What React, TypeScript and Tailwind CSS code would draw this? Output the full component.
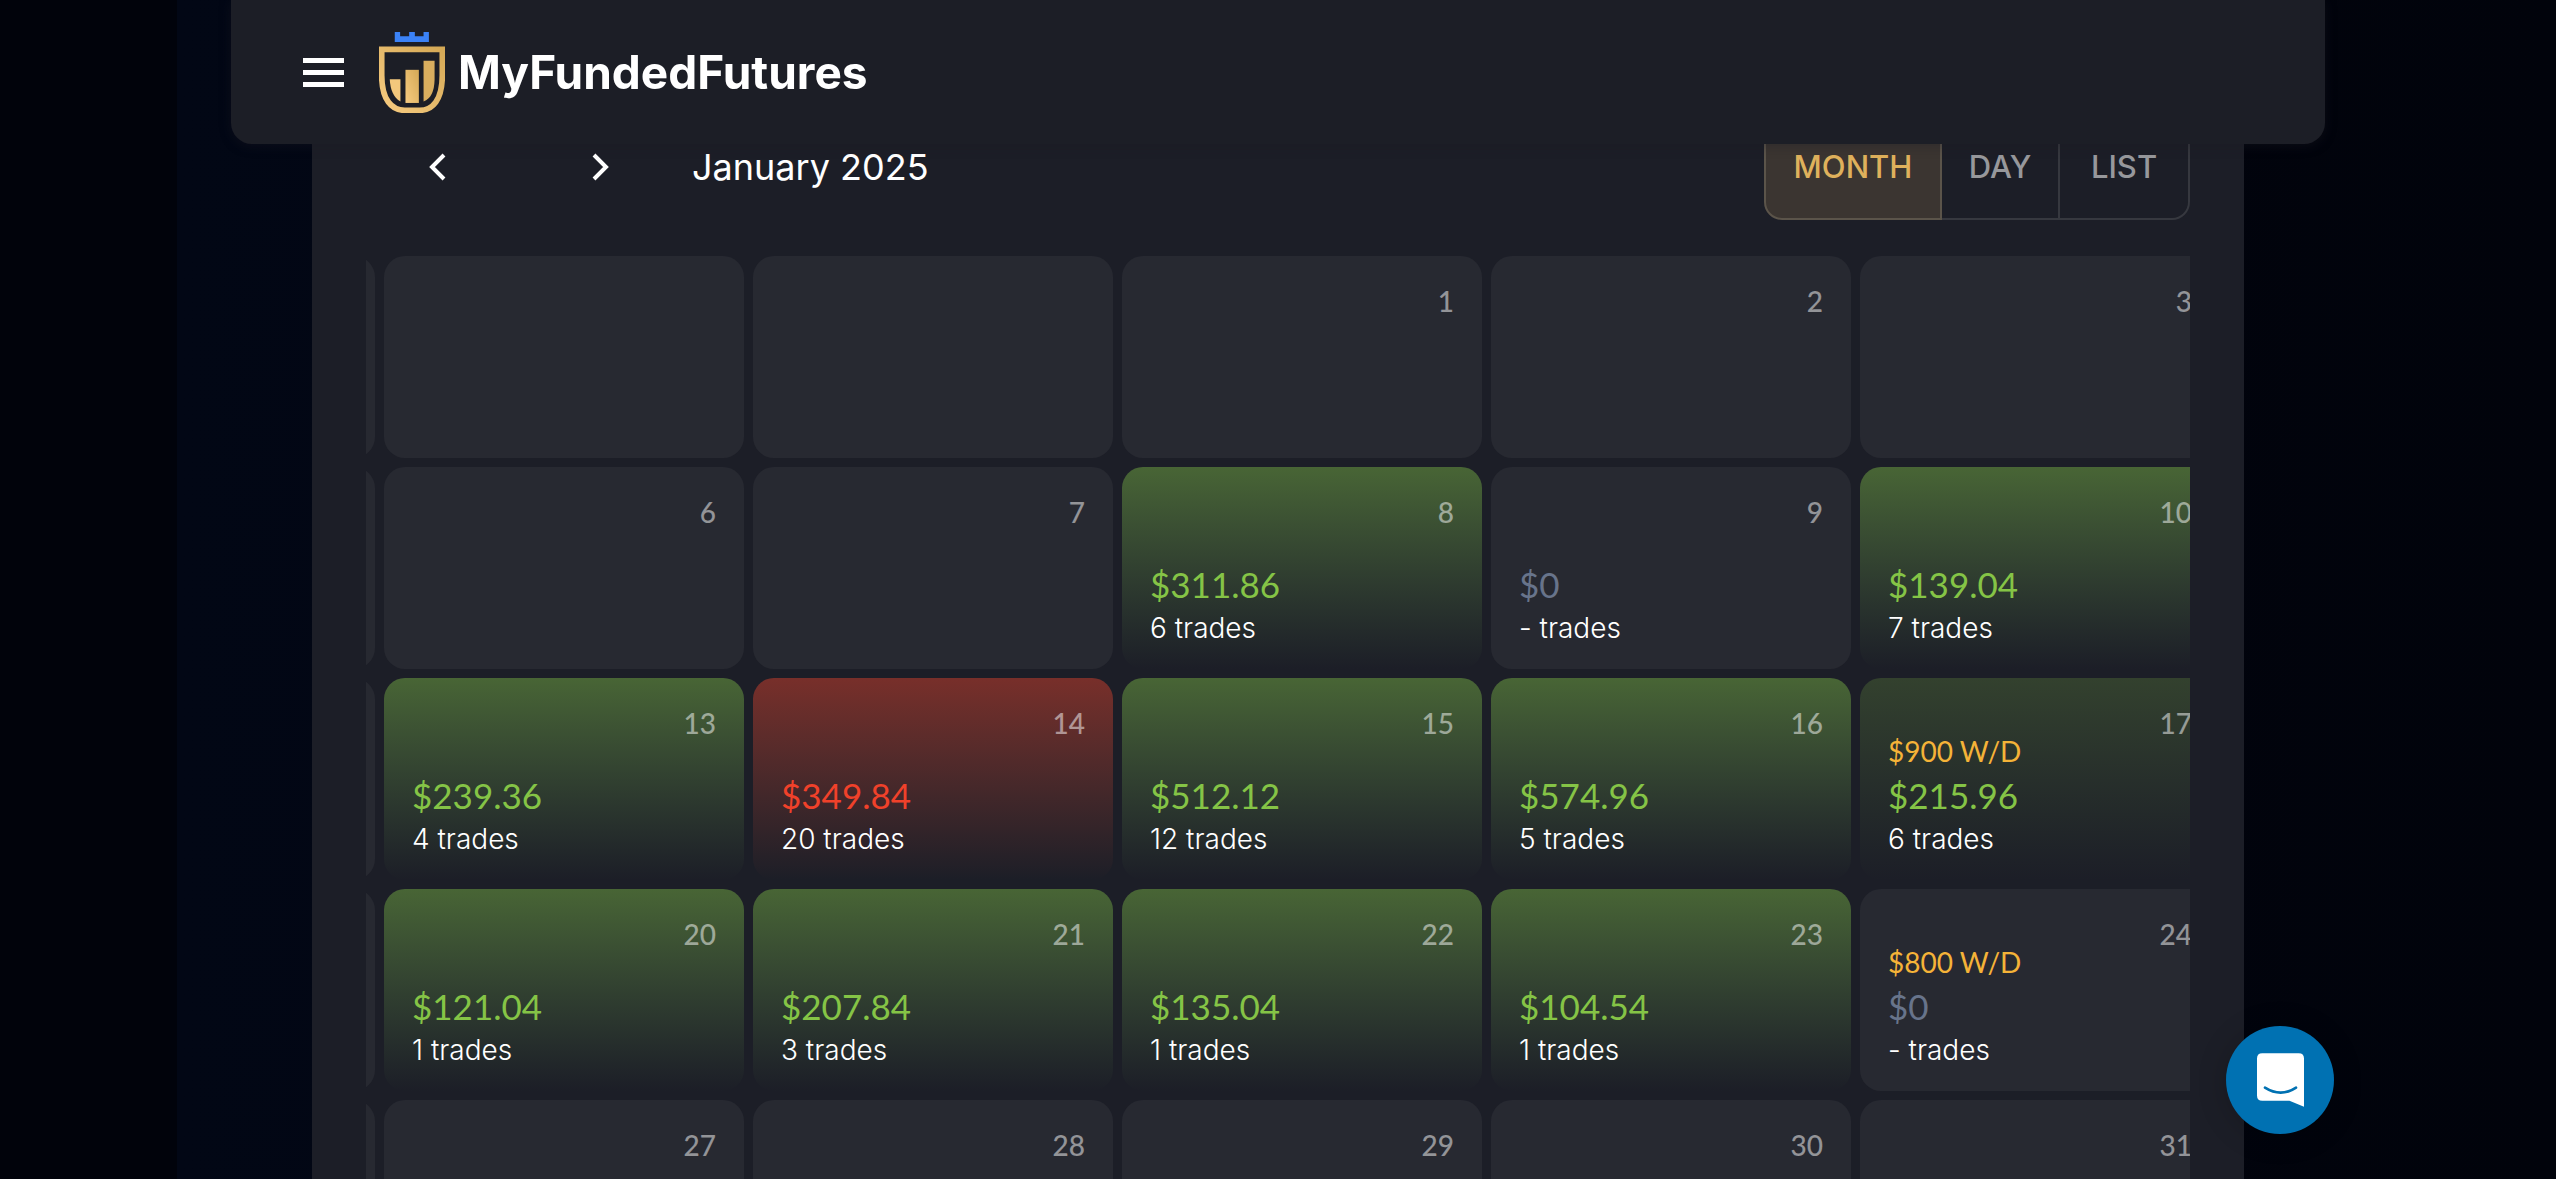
import React from 'react';

type Tone = 'empty' | 'win' | 'softWin' | 'loss';

type Day = {
  date?: number;
  tone?: Tone;
  amount?: string;
  trades?: string;
  withdrawal?: string;
};

const weeks: Day[][] = [
  [{}, {}, {}, { date: 1 }, { date: 2 }, { date: 3 }],
  [
    {},
    { date: 6 },
    { date: 7 },
    { date: 8, tone: 'win', amount: '$311.86', trades: '6' },
    { date: 9, amount: '$0', trades: '-' },
    { date: 10, tone: 'win', amount: '$139.04', trades: '7' },
  ],
  [
    {},
    { date: 13, tone: 'win', amount: '$239.36', trades: '4' },
    { date: 14, tone: 'loss', amount: '$349.84', trades: '20' },
    { date: 15, tone: 'win', amount: '$512.12', trades: '12' },
    { date: 16, tone: 'win', amount: '$574.96', trades: '5' },
    { date: 17, tone: 'softWin', amount: '$215.96', trades: '6', withdrawal: '$900 W/D' },
  ],
  [
    {},
    { date: 20, tone: 'win', amount: '$121.04', trades: '1' },
    { date: 21, tone: 'win', amount: '$207.84', trades: '3' },
    { date: 22, tone: 'win', amount: '$135.04', trades: '1' },
    { date: 23, tone: 'win', amount: '$104.54', trades: '1' },
    { date: 24, amount: '$0', trades: '-', withdrawal: '$800 W/D' },
  ],
  [{}, { date: 27 }, { date: 28 }, { date: 29 }, { date: 30 }, { date: 31 }],
];

const cellTone: Record<Tone, string> = {
  empty: 'bg-[#272931]',
  win: 'bg-linear-to-b from-[#486535] to-[#1c1e27]',
  softWin: 'bg-linear-to-b from-[#33412e] to-[#1c1e27]',
  loss: 'bg-linear-to-b from-[#782f2a] to-[#1c1e27]',
};

const amountTone: Record<Tone, string> = {
  empty: 'text-[#68748b]',
  win: 'text-[#85c446]',
  softWin: 'text-[#85c446]',
  loss: 'text-[#f0412a]',
};

function LogoMark() {
  return (
    <svg viewBox="28 33 197 242" className="h-[81px] w-[66px]" aria-hidden="true">
      <defs>
        <linearGradient id="gold" x1="0" y1="1" x2="1" y2="0">
          <stop offset="0" stopColor="#f6cb80" />
          <stop offset="1" stopColor="#d5a956" />
        </linearGradient>
      </defs>
      <path d="M75 33h16v13h27V33h17v13h26V33h16v30H75z" fill="#3b82f6" />
      <path
        d="M36 85H217V162C217 236 188 267 149 267H105C66 267 36 236 36 162Z"
        fill="none"
        stroke="url(#gold)"
        strokeWidth="17"
      />
      <path d="M60 174h32v67C72 228 62 208 60 174z" fill="#f3c87c" />
      <path d="M107 146h40v99h-40z" fill="url(#gold)" />
      <path d="M161 119h33v56c-1 37-11 56-33 66z" fill="#d9ae5e" />
    </svg>
  );
}

function Chevron({ d }: { d: string }) {
  return (
    <svg viewBox="0 0 18 28" className="h-[28px] w-[18px]" aria-hidden="true">
      <path d={d} fill="none" stroke="#fff" strokeWidth="4" />
    </svg>
  );
}

function Header() {
  return (
    <header className="fixed inset-x-[231px] top-0 z-10 flex h-[144px] items-center rounded-b-[21px] bg-[#1c1e26] px-[72px] shadow-[0_2px_12px_rgba(28,24,34,0.4)]">
      <button type="button" aria-label="Open menu" className="mr-[35px]">
        <svg viewBox="0 0 41 29" className="h-[29px] w-[41px]" aria-hidden="true">
          <path d="M0 0h41v5H0zM0 12h41v5H0zM0 24h41v5H0z" fill="#fff" />
        </svg>
      </button>
      <a href="#" className="flex items-center gap-[13px]">
        <LogoMark />
        <span className="font-['Inter',sans-serif] text-[46px] leading-[56px] font-bold text-white">
          MyFundedFutures
        </span>
      </a>
    </header>
  );
}

function Toolbar() {
  return (
    <div className="flex h-[106px] items-center justify-between font-['Inter',sans-serif]">
      <div className="flex items-center">
        <button type="button" aria-label="Previous month" className="flex w-[142px] justify-center">
          <Chevron d="M16 2L4 14L16 26" />
        </button>
        <button type="button" aria-label="Next month" className="ml-[20px] flex w-[146px] justify-center">
          <Chevron d="M2 2L14 14L2 26" />
        </button>
        <h2 className="ml-[18px] text-[36px] leading-[48px] text-white">January 2025</h2>
      </div>
      <div className="flex h-full text-[31px] font-medium text-[#97989c]">
        <button
          type="button"
          className="w-[178px] rounded-l-[18px] border-2 border-[#5b544a] bg-[#3b3531] text-[#dfb15c]"
        >
          MONTH
        </button>
        <button type="button" className="w-[118px] border-y-2 border-r-2 border-[#36383f]">
          DAY
        </button>
        <button type="button" className="w-[130px] rounded-r-[18px] border-y-2 border-r-2 border-[#36383f]">
          LIST
        </button>
      </div>
    </div>
  );
}

function DayCell({ day }: { day: Day }) {
  const tone = day.tone ?? 'empty';
  return (
    <td className={`rounded-[21px] p-0 ${cellTone[tone]}`}>
      <div className="flex h-[202px] flex-col justify-between px-[28px] pt-[35px] pb-[24px]">
        <p className="text-right text-[28px] leading-5 font-medium text-white/50">{day.date}</p>
        {day.amount && (
          <div>
            {day.withdrawal && (
              <p className="text-[28px] leading-[34px] text-[#f5b338]">{day.withdrawal}</p>
            )}
            <p className={`text-[35px] leading-[54px] ${amountTone[tone]}`}>{day.amount}</p>
            <p className="font-['Inter',sans-serif] text-[28px] leading-[34px] font-light text-white">
              {day.trades} trades
            </p>
          </div>
        )}
      </div>
    </td>
  );
}

function ChatButton() {
  return (
    <button
      type="button"
      aria-label="Open chat"
      className="fixed right-[222px] bottom-[45px] z-20 flex size-[108px] items-center justify-center rounded-full bg-[#0071b2] shadow-[0_3px_30px_rgba(0,0,0,0.2)]"
    >
      <svg viewBox="0 0 142 162" className="h-[54px] w-[47px]" aria-hidden="true">
        <path
          d="M16 0H126Q142 0 142 16V162L98 144H16Q0 144 0 128V16Q0 0 16 0Z"
          fill="#fff"
        />
        <path d="M24 104Q72 134 118 104" fill="none" stroke="#0071b2" strokeWidth="8" strokeLinecap="round" />
      </svg>
    </button>
  );
}

export default function App() {
  return (
    <div className="h-screen overflow-hidden bg-[#01030b] font-['Lato',sans-serif]">
      <Header />
      <div className="ml-[177px] bg-linear-to-r from-[#020715] to-[#01030b]">
        <main className="mr-[312px] ml-[135px] bg-[#1c1e27] px-[54px] pt-[114px]">
          <Toolbar />
          <div className="mt-[27px] overflow-hidden">
            <table className="-ml-[360px] w-[2223px] table-fixed border-separate border-spacing-[9px]">
              <tbody>
                {weeks.map((week, i) => (
                  <tr key={i}>
                    {week.map((day, j) => (
                      <DayCell key={j} day={day} />
                    ))}
                  </tr>
                ))}
              </tbody>
            </table>
          </div>
        </main>
      </div>
      <ChatButton />
    </div>
  );
}
